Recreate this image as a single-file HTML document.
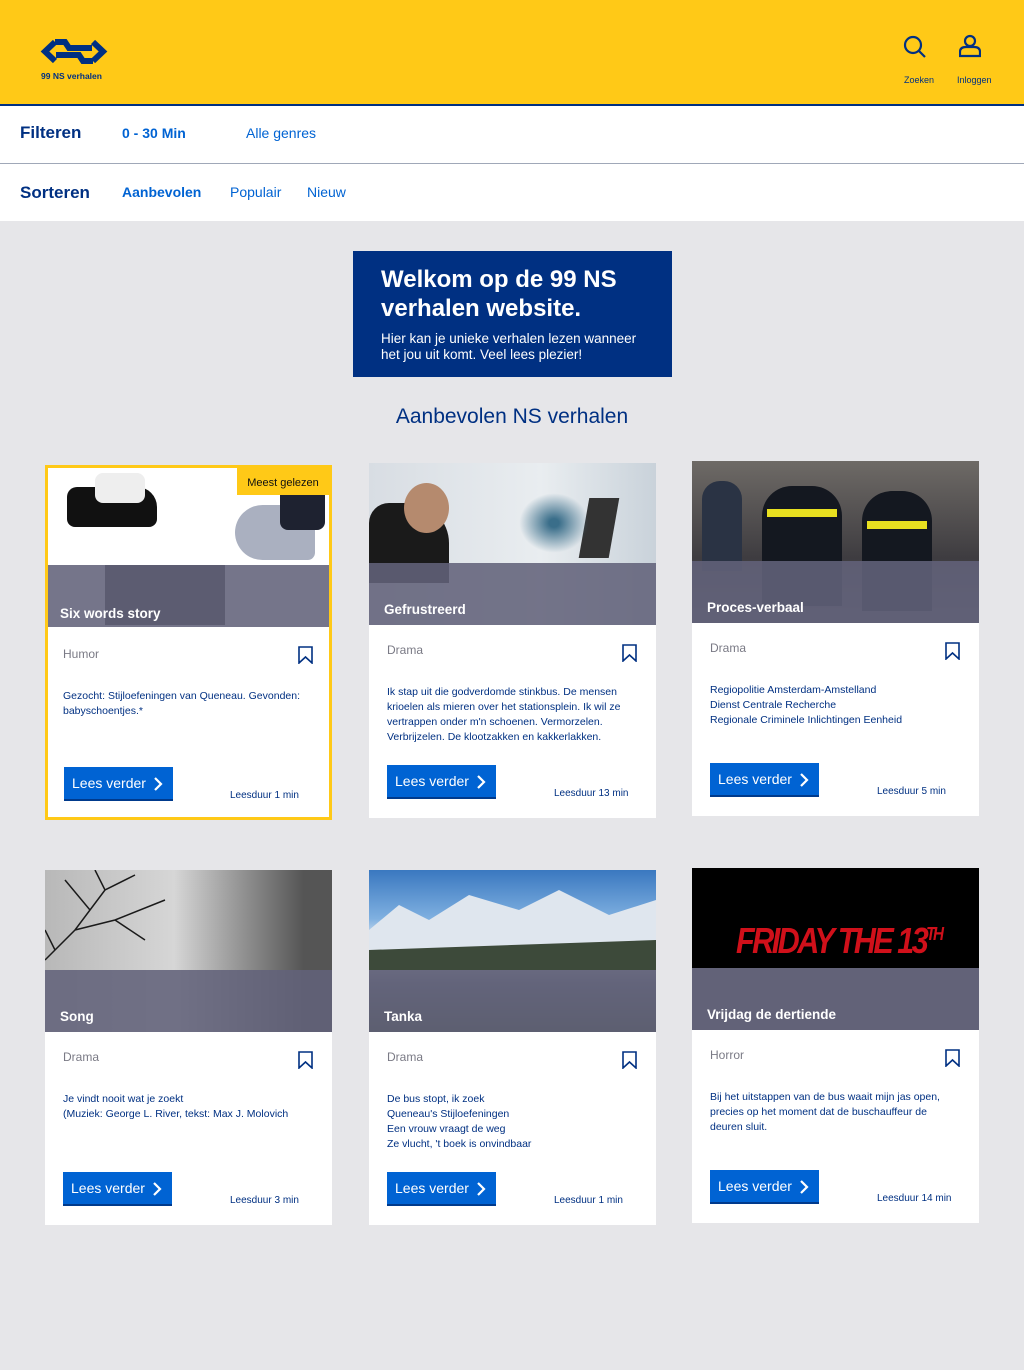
<!DOCTYPE html>
<html><head><meta charset="utf-8"><style>
*{margin:0;padding:0;box-sizing:border-box}
body{width:1024px;height:1370px;background:#e6e6e9;font-family:"Liberation Sans",sans-serif;position:relative;overflow:hidden}
.a{position:absolute}
.hdr{left:0;top:0;width:1024px;background:#ffc917;border-bottom:2px solid #003082;height:106px}
.row{left:0;width:1024px;background:#fff}
.card{position:absolute;width:287px;height:355px;background:#fff;overflow:hidden}
.img{position:absolute;left:0;top:0;width:287px;height:162px;overflow:hidden}
.band{position:absolute;left:0;top:100px;width:287px;height:62px;background:rgba(98,98,122,.88)}
.title{position:absolute;left:15px;top:139px;color:#fff;font-weight:bold;font-size:13.5px}
.genre{position:absolute;left:18px;top:180px;color:#7a7a85;font-size:12px}
.bm{position:absolute;left:253px;top:181px}
.txt{position:absolute;left:18px;top:222px;width:248px;color:#003082;font-size:10.5px;line-height:15px}
.btn{position:absolute;left:18px;top:302px;width:109px;height:34px;background:#0063d3;border-bottom:2px solid #003a8c;color:#fff;font-size:14px;line-height:33px;padding-left:8px}
.btn svg{position:absolute;left:89px;top:10px}
.dur{position:absolute;left:185px;top:325px;color:#003082;font-size:10px}
</style></head><body>
<div class="a hdr"></div>
<svg class="a" style="left:40px;top:38px" width="68" height="28" viewBox="0 0 68 28">
<g stroke="#003082" stroke-width="6" fill="none" stroke-linejoin="miter">
<path d="M15 4 H25 L29 10 H52"/>
<path d="M53 23 H43 L39 17 H16"/>
<path d="M15 4 L5 13.5 L15 23"/>
<path d="M53 4 L63 13.5 L53 23"/>
</g>
</svg>
<div class="a" style="left:41px;top:71px;font-size:8.5px;font-weight:bold;color:#003082">99 NS verhalen</div>
<svg class="a" style="left:903px;top:35px" width="24" height="24" viewBox="0 0 24 24"><circle cx="10" cy="10" r="8" stroke="#003082" stroke-width="2.2" fill="none"/><path d="M16 16 L22 22" stroke="#003082" stroke-width="2.2"/></svg>
<svg class="a" style="left:959px;top:34px" width="22" height="24" viewBox="0 0 22 24"><circle cx="11" cy="7" r="5" stroke="#003082" stroke-width="2.2" fill="none"/><path d="M1 22 V18 Q1 13 7 13 H15 Q21 13 21 18 V22 Z" stroke="#003082" stroke-width="2.2" fill="none"/></svg>
<div class="a" style="left:904px;top:75px;font-size:9px;color:#003082">Zoeken</div>
<div class="a" style="left:957px;top:75px;font-size:9px;color:#003082">Inloggen</div>
<div class="a row" style="top:106px;border-bottom:1px solid #a0a8b8;height:58px"></div>
<div class="a row" style="top:164px;height:57px"></div>
<div class="a" style="left:20px;top:123px;font-size:17px;font-weight:bold;color:#003082">Filteren</div>
<div class="a" style="left:122px;top:125px;font-size:14px;font-weight:bold;color:#0063d3">0 - 30 Min</div>
<div class="a" style="left:246px;top:125px;font-size:14px;color:#0063d3">Alle genres</div>
<div class="a" style="left:20px;top:183px;font-size:17px;font-weight:bold;color:#003082">Sorteren</div>
<div class="a" style="left:122px;top:184px;font-size:14px;font-weight:bold;color:#0063d3">Aanbevolen</div>
<div class="a" style="left:230px;top:184px;font-size:14px;color:#0063d3">Populair</div>
<div class="a" style="left:307px;top:184px;font-size:14px;color:#0063d3">Nieuw</div>
<div class="a" style="left:353px;top:251px;width:319px;height:126px;background:#003082;color:#fff;padding:14px 28px">
<div style="font-size:24px;font-weight:bold;line-height:29px">Welkom op de 99 NS verhalen website.</div>
<div style="font-size:13.5px;line-height:16px;margin-top:8px">Hier kan je unieke verhalen lezen wanneer het jou uit komt. Veel lees plezier!</div>
</div>
<div class="a" style="left:0;width:1024px;top:405px;text-align:center;font-size:21px;color:#003082">Aanbevolen NS verhalen</div>

<!-- card 1 -->
<div class="card" style="left:45px;top:465px">
<div class="img" style="background:#fff">
<div class="a" style="left:22px;top:22px;width:90px;height:40px;background:#111;border-radius:10px 20px 8px 8px"></div>
<div class="a" style="left:50px;top:8px;width:50px;height:30px;background:#eee;border-radius:8px"></div>
<div class="a" style="left:190px;top:40px;width:80px;height:55px;background:#aab0c0;border-radius:30px 8px 8px 30px"></div>
<div class="a" style="left:235px;top:20px;width:45px;height:45px;background:#1e2230;border-radius:8px"></div>
<div class="a" style="left:60px;top:100px;width:120px;height:60px;background:#333"></div>
</div>
<div class="band"></div>
<div class="a" style="left:192px;top:3px;width:92px;height:27px;background:#ffc917;font-size:11px;color:#111;line-height:30px;text-align:center">Meest gelezen</div>
<div class="title" style="top:141px">Six words story</div>
<div class="genre" style="top:182px">Humor</div>
<svg class="bm" style="top:181px" width="15" height="18" viewBox="0 0 15 18"><path d="M1 1 H14 V17 L7.5 11 L1 17 Z" stroke="#003082" stroke-width="1.6" fill="none"/></svg>
<div class="txt" style="top:224px">Gezocht: Stijloefeningen van Queneau. Gevonden: babyschoentjes.*</div>
<div class="btn" style="left:19px">Lees verder<svg width="10" height="14" viewBox="0 0 10 14"><path d="M2 1 L8 7 L2 13" stroke="#fff" stroke-width="2.2" fill="none"/></svg></div>
<div class="dur">Leesduur 1 min</div>
<div class="a" style="left:0;top:0;width:287px;height:355px;border:3px solid #ffc917"></div>
</div>

<!-- card 2 -->
<div class="card" style="left:369px;top:463px">
<div class="img" style="background:linear-gradient(90deg,#d8dde3,#e9edf0 60%,#c9d2da)">
<div class="a" style="left:0;top:40px;width:80px;height:80px;background:#1a1a1a;border-radius:20px 40px 0 0"></div>
<div class="a" style="left:35px;top:20px;width:45px;height:50px;background:#b58a6e;border-radius:50%"></div>
<div class="a" style="left:215px;top:35px;width:30px;height:60px;background:#333;transform:skewX(-10deg)"></div>
<div class="a" style="left:150px;top:30px;width:70px;height:60px;background:radial-gradient(#3a6e8a 10%,transparent 70%)"></div>
</div>
<div class="band"></div>
<div class="title">Gefrustreerd</div>
<div class="genre">Drama</div>
<svg class="bm" width="15" height="18" viewBox="0 0 15 18"><path d="M1 1 H14 V17 L7.5 11 L1 17 Z" stroke="#003082" stroke-width="1.6" fill="none"/></svg>
<div class="txt">Ik stap uit die godverdomde stinkbus. De mensen krioelen als mieren over het stationsplein. Ik wil ze vertrappen onder m'n schoenen. Vermorzelen. Verbrijzelen. De klootzakken en kakkerlakken.</div>
<div class="btn">Lees verder<svg width="10" height="14" viewBox="0 0 10 14"><path d="M2 1 L8 7 L2 13" stroke="#fff" stroke-width="2.2" fill="none"/></svg></div>
<div class="dur">Leesduur 13 min</div>
</div>

<!-- card 3 -->
<div class="card" style="left:692px;top:461px">
<div class="img" style="background:linear-gradient(180deg,#6e6a66,#3e3c40 60%,#55555e)">
<div class="a" style="left:10px;top:20px;width:40px;height:90px;background:#2a3344;border-radius:18px 18px 0 0"></div>
<div class="a" style="left:70px;top:25px;width:80px;height:120px;background:#141820;border-radius:30px 30px 0 0"></div>
<div class="a" style="left:75px;top:48px;width:70px;height:8px;background:#e8e020"></div>
<div class="a" style="left:170px;top:30px;width:70px;height:120px;background:#141820;border-radius:30px 30px 0 0"></div>
<div class="a" style="left:175px;top:60px;width:60px;height:8px;background:#e8e020"></div>
</div>
<div class="band"></div>
<div class="title">Proces-verbaal</div>
<div class="genre">Drama</div>
<svg class="bm" width="15" height="18" viewBox="0 0 15 18"><path d="M1 1 H14 V17 L7.5 11 L1 17 Z" stroke="#003082" stroke-width="1.6" fill="none"/></svg>
<div class="txt">Regiopolitie Amsterdam-Amstelland<br>Dienst Centrale Recherche<br>Regionale Criminele Inlichtingen Eenheid</div>
<div class="btn">Lees verder<svg width="10" height="14" viewBox="0 0 10 14"><path d="M2 1 L8 7 L2 13" stroke="#fff" stroke-width="2.2" fill="none"/></svg></div>
<div class="dur">Leesduur 5 min</div>
</div>

<!-- card 4 -->
<div class="card" style="left:45px;top:870px">
<div class="img" style="background:linear-gradient(90deg,#b8b8b8,#d6d6d6 45%,#555 90%)">
<svg class="a" style="left:0;top:0" width="140" height="100" viewBox="0 0 140 100"><path d="M0 90 L30 60 L60 20 L90 5 M30 60 L70 50 L120 30 M45 40 L20 10 M60 20 L50 0 M70 50 L100 70 M10 80 L0 60" stroke="#1a1a1a" stroke-width="1.5" fill="none"/></svg>
</div>
<div class="band"></div>
<div class="title">Song</div>
<div class="genre">Drama</div>
<svg class="bm" width="15" height="18" viewBox="0 0 15 18"><path d="M1 1 H14 V17 L7.5 11 L1 17 Z" stroke="#003082" stroke-width="1.6" fill="none"/></svg>
<div class="txt">Je vindt nooit wat je zoekt<br>(Muziek: George L. River, tekst: Max J. Molovich</div>
<div class="btn">Lees verder<svg width="10" height="14" viewBox="0 0 10 14"><path d="M2 1 L8 7 L2 13" stroke="#fff" stroke-width="2.2" fill="none"/></svg></div>
<div class="dur">Leesduur 3 min</div>
</div>

<!-- card 5 -->
<div class="card" style="left:369px;top:870px">
<div class="img" style="background:linear-gradient(180deg,#3a78c0,#7fb0e0 30%,#e8eef4 45%,#6a7380 70%,#3a4a30)">
<svg class="a" style="left:0;top:0" width="287" height="100" viewBox="0 0 287 100"><path d="M0 60 L30 35 L60 50 L100 25 L150 40 L190 20 L240 45 L287 30 V80 H0Z" fill="#dfe6ee"/><path d="M0 80 L287 70 V100 H0Z" fill="#3d4a3a"/></svg>
</div>
<div class="band"></div>
<div class="title">Tanka</div>
<div class="genre">Drama</div>
<svg class="bm" width="15" height="18" viewBox="0 0 15 18"><path d="M1 1 H14 V17 L7.5 11 L1 17 Z" stroke="#003082" stroke-width="1.6" fill="none"/></svg>
<div class="txt">De bus stopt, ik zoek<br>Queneau's Stijloefeningen<br>Een vrouw vraagt de weg<br>Ze vlucht, 't boek is onvindbaar</div>
<div class="btn">Lees verder<svg width="10" height="14" viewBox="0 0 10 14"><path d="M2 1 L8 7 L2 13" stroke="#fff" stroke-width="2.2" fill="none"/></svg></div>
<div class="dur">Leesduur 1 min</div>
</div>

<!-- card 6 -->
<div class="card" style="left:692px;top:868px">
<div class="img" style="background:#000">
<div class="a" style="left:44px;top:52px;font-size:36px;font-weight:bold;font-style:italic;color:#d0101a;letter-spacing:-3px;transform:scaleX(.85);transform-origin:left">FRIDAY THE 13<sup style="font-size:18px">TH</sup></div>
</div>
<div class="band" style="background:rgba(98,98,120,1)"></div>
<div class="title">Vrijdag de dertiende</div>
<div class="genre">Horror</div>
<svg class="bm" width="15" height="18" viewBox="0 0 15 18"><path d="M1 1 H14 V17 L7.5 11 L1 17 Z" stroke="#003082" stroke-width="1.6" fill="none"/></svg>
<div class="txt" style="width:240px">Bij het uitstappen van de bus waait mijn jas open, precies op het moment dat de buschauffeur de deuren sluit.</div>
<div class="btn">Lees verder<svg width="10" height="14" viewBox="0 0 10 14"><path d="M2 1 L8 7 L2 13" stroke="#fff" stroke-width="2.2" fill="none"/></svg></div>
<div class="dur">Leesduur 14 min</div>
</div>
</body></html>
